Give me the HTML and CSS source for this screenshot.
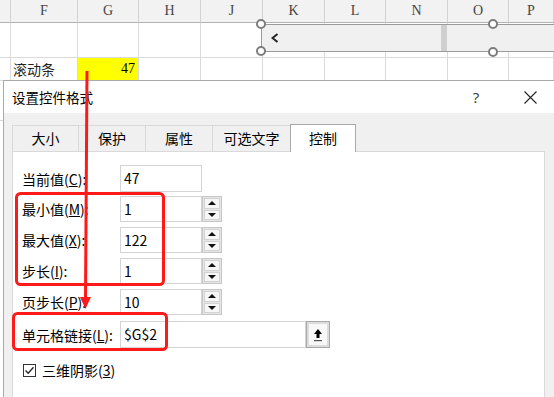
FILE: index.html
```html
<!DOCTYPE html>
<html lang="zh-CN">
<head>
  <meta charset="UTF-8">
  <title>设置控件格式</title>
  <link rel="stylesheet" href="styles.css">
</head>
<body>

<!-- 工作表背景 -->
<div class="sheet">
  <div class="row head">
    <div class="cell"></div>
    <div class="cell">F</div>
    <div class="cell">G</div>
    <div class="cell">H</div>
    <div class="cell">J</div>
    <div class="cell">K</div>
    <div class="cell">L</div>
    <div class="cell">N</div>
    <div class="cell">O</div>
    <div class="cell">P</div>
  </div>
  <div class="row r1">
    <div class="cell"></div><div class="cell"></div><div class="cell"></div><div class="cell"></div><div class="cell"></div>
    <div class="cell"></div><div class="cell"></div><div class="cell"></div><div class="cell"></div><div class="cell"></div>
  </div>
  <div class="row r2">
    <div class="cell"></div>
    <div class="cell txt">滚动条</div>
    <div class="cell num hl">47</div>
    <div class="cell"></div><div class="cell"></div><div class="cell"></div>
    <div class="cell"></div><div class="cell"></div><div class="cell"></div><div class="cell"></div>
  </div>
  <div class="row r3">
    <div class="cell"></div><div class="cell"></div><div class="cell"></div><div class="cell"></div><div class="cell"></div>
    <div class="cell"></div><div class="cell"></div><div class="cell"></div><div class="cell"></div><div class="cell"></div>
  </div>
</div>

<!-- 滚动条控件 -->
<div class="scroll">
  <svg class="chev" width="8" height="10" viewBox="0 0 8 10"><polyline points="6.5,1 1.5,5 6.5,9" fill="none" stroke="#222" stroke-width="2"/></svg>
  <div class="thumb"></div>
</div>
<div class="handle h-tl"></div>
<div class="handle h-bl"></div>
<div class="handle h-tr"></div>
<div class="handle h-br"></div>

<!-- 对话框 -->
<div class="dialog">
  <div class="titlebar">
    <span class="title">设置控件格式</span>
    <span class="help">?</span>
    <span class="close">
      <svg width="13" height="13" viewBox="0 0 13 13"><path d="M0.5 0.5 L12.5 12.5 M12.5 0.5 L0.5 12.5" stroke="#222" stroke-width="1.1"/></svg>
    </span>
  </div>
  <div class="dlg-body">
    <div class="tabs">
      <div class="tab t1">大小</div>
      <div class="tab t2">保护</div>
      <div class="tab t3">属性</div>
      <div class="tab t4">可选文字</div>
      <div class="tab active">控制</div>
    </div>
    <div class="panel">
      <div class="field first">
        <label>当前值(<u>C</u>):</label>
        <div class="val">47</div>
      </div>
      <div class="field">
        <label>最小值(<u>M</u>):</label>
        <div class="val">1</div>
        <div class="spin"><span><i class="up"></i></span><span><i class="down"></i></span></div>
      </div>
      <div class="field">
        <label>最大值(<u>X</u>):</label>
        <div class="val">122</div>
        <div class="spin"><span><i class="up"></i></span><span><i class="down"></i></span></div>
      </div>
      <div class="field">
        <label>步长(<u>I</u>):</label>
        <div class="val">1</div>
        <div class="spin"><span><i class="up"></i></span><span><i class="down"></i></span></div>
      </div>
      <div class="field">
        <label>页步长(<u>P</u>):</label>
        <div class="val">10</div>
        <div class="spin"><span><i class="up"></i></span><span><i class="down"></i></span></div>
      </div>
      <div class="field link">
        <label>单元格链接(<u>L</u>):</label>
        <div class="val wide">$G$2</div>
        <div class="pick">
          <span>
            <svg width="10" height="14" viewBox="0 0 10 14">
              <path d="M5 1 L9 6 L6.5 6 L6.5 10 L3.5 10 L3.5 6 L1 6 Z" fill="#000"/>
              <rect x="1" y="12" width="8" height="1.2" fill="#555"/>
            </svg>
          </span>
        </div>
      </div>
      <div class="check-row">
        <span class="check">
          <svg width="11" height="11" viewBox="0 0 11 11"><polyline points="1.5,5.5 4.2,8.3 9.5,2.2" fill="none" stroke="#222" stroke-width="1.3"/></svg>
        </span>
        <span>三维阴影(<u>3</u>)</span>
      </div>
    </div>
  </div>
</div>

<!-- 红色标注 -->
<svg class="marks" width="554" height="397" viewBox="0 0 554 397">
  <rect x="16.5" y="193.5" width="147" height="91" rx="4" fill="none" stroke="#ff1a1a" stroke-width="3"/>
  <rect x="13.5" y="313.5" width="153" height="36" rx="4" fill="none" stroke="#ff1a1a" stroke-width="3"/>
  <line x1="87" y1="71" x2="85.5" y2="299" stroke="#ff1a1a" stroke-width="3"/>
  <polygon points="80,297 91,297 85.5,309" fill="#ff1a1a"/>
</svg>

</body>
</html>
```

FILE: styles.css
```css
* {
  box-sizing: border-box;
}
body {
  margin: 0;
  width: 554px;
  height: 397px;
  overflow: hidden;
  position: relative;
  background: #fff;
  font-family: "Noto Sans CJK SC", sans-serif;
  color: #000;
}

/* sheet */
.row {
  display: grid;
  grid-template-columns: 11px 67px 61px 62px 62px 62px 61px 62px 61px 45px;
}
.cell {
  border-right: 1px solid #dadada;
  border-bottom: 1px solid #dadada;
}
.head .cell {
  height: 23px;
  background: #f2f2f2;
  border-bottom-color: #b4b4b4;
  border-right-color: #d2d2d2;
  font: 14px "Liberation Serif", serif;
  color: #444;
  text-align: center;
  line-height: 22px;
}
.r1 .cell {
  height: 35px;
}
.r2 .cell {
  height: 23px;
  font-size: 14px;
  line-height: 22px;
}
.r3 .cell {
  height: 40px;
}
.txt {
  padding-left: 2px;
  color: #222;
}
.num {
  text-align: right;
  padding-right: 3px;
  font-family: "Liberation Serif", serif;
  font-size: 15px;
}
.hl {
  background: #ffff00;
}

/* scroll bar object */
.scroll {
  position: absolute;
  left: 261px;
  top: 24px;
  width: 300px;
  height: 28px;
  background: #f0f0f0;
  border: 1px solid #9a9a9a;
  border-right: none;
  display: flex;
  align-items: center;
}
.chev {
  margin-left: 9px;
}
.thumb {
  align-self: stretch;
  width: 6px;
  margin-left: 162px;
  background: #cfcfcf;
}
.handle {
  position: absolute;
  width: 10px;
  height: 10px;
  border: 2px solid #7d7d7d;
  border-radius: 50%;
  background: #fff;
}
.h-tl { left: 256px; top: 19px; }
.h-bl { left: 256px; top: 46px; }
.h-tr { left: 488px; top: 19px; }
.h-br { left: 488px; top: 47px; }

/* dialog */
.dialog {
  position: absolute;
  left: 3px;
  top: 80px;
  width: 560px;
  height: 330px;
  background: #f0f0f0;
  border-left: 1px solid #a9a9a9;
  border-top: 1px solid #a9a9a9;
}
.titlebar {
  height: 32px;
  background: #fff;
  display: flex;
  align-items: center;
  padding-left: 8px;
  padding-right: 13px;
}
.title {
  font-size: 13.5px;
  margin-right: auto;
}
.help {
  width: 28px;
  text-align: center;
  font-family: "Open Sans", sans-serif;
  font-size: 15px;
  color: #333;
  margin-right: 20px;
}
.close {
  width: 40px;
  display: flex;
  justify-content: center;
}
.dlg-body {
  padding: 12px 0 0 8px;
}
.tabs {
  display: flex;
  height: 26px;
  align-items: flex-end;
}
.tab {
  height: 26px;
  border: 1px solid #d9d9d9;
  border-bottom: none;
  background: #f0f0f0;
  font-size: 14px;
  line-height: 24px;
  text-align: center;
  margin-left: -1px;
}
.t1 { width: 67px; margin-left: 0; }
.t2 { width: 68px; }
.t3 { width: 68px; }
.t4 { width: 79px; }
.tab.active {
  width: 66px;
  height: 28px;
  margin-bottom: -1px;
  background: #fff;
  border-color: #a8a8a8;
  position: relative;
  z-index: 1;
  line-height: 26px;
}
.panel {
  width: 533px;
  height: 260px;
  background: #fff;
  border: 1px solid #d9d9d9;
  padding: 13px 0 0 9px;
  font-size: 14px;
}
.field {
  display: flex;
  align-items: center;
  height: 26px;
  margin-top: 5px;
}
.field.first {
  height: 27px;
  margin-top: 0;
}
.field.first + .field {
  margin-top: 4px;
}
.field.link {
  height: 27px;
  margin-top: 6px;
}
.field label {
  width: 98px;
}
.val {
  width: 82px;
  height: 100%;
  border: 1px solid #d4d4d4;
  padding-left: 3px;
  line-height: 24px;
  font-size: 14px;
  background: #fff;
}
.val.wide {
  width: 186px;
}
.spin {
  width: 20px;
  height: 100%;
  border: 1px solid #c6c6c6;
  background: #e6e6e6;
  padding: 1px;
  display: flex;
  flex-direction: column;
  gap: 1px;
}
.spin span {
  flex: 1;
  background: #f6f6f6;
  border: 1px solid #d3d3d3;
  display: flex;
  align-items: center;
  justify-content: center;
}
.up {
  border-left: 4px solid transparent;
  border-right: 4px solid transparent;
  border-bottom: 4px solid #111;
}
.down {
  border-left: 4px solid transparent;
  border-right: 4px solid transparent;
  border-top: 4px solid #111;
}
.pick {
  width: 24px;
  height: 100%;
  border: 1px solid #a9a9a9;
  background: #dcdcdc;
  padding: 2px;
}
.pick span {
  display: flex;
  align-items: center;
  justify-content: center;
  height: 100%;
  background: #f8f8f8;
}
.check-row {
  display: flex;
  align-items: center;
  height: 16px;
  margin-top: 14px;
}
.check {
  width: 13px;
  height: 13px;
  margin-left: 1px;
  margin-right: 6px;
  border: 1px solid #333;
  display: flex;
  align-items: center;
  justify-content: center;
}

/* annotation */
.marks {
  position: absolute;
  left: 0;
  top: 0;
  pointer-events: none;
}
```
